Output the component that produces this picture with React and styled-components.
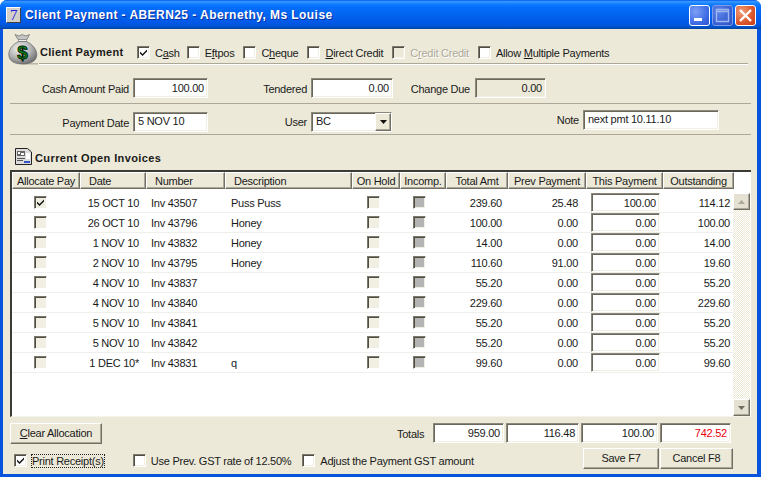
import React from "react";
import styled, { createGlobalStyle, css } from "styled-components";

const Global = createGlobalStyle`
  html, body { margin: 0; padding: 0; background: #fff; }
  * { box-sizing: border-box; }
  body { font-family: "Liberation Sans", Arial, sans-serif; font-size: 11px; color: #1a1a1a; letter-spacing: -0.25px; }
`;

const sunken = css`
  border-style: solid;
  border-width: 1px;
  border-color: #8c897a #fff #fff #8c897a;
  box-shadow: inset 1px 1px 0 #6a685c, inset -1px -1px 0 #f1efe2;
`;
const raised = css`
  border-style: solid;
  border-width: 1px;
  border-color: #fff #716f64 #716f64 #fff;
  box-shadow: inset -1px -1px 0 #aca899;
  background: #ece9d8;
`;

const Window = styled.div`
  width: 761px; height: 477px; display: flex; flex-direction: column;
  background: #0855dd; border-radius: 7px 7px 0 0; overflow: hidden;
`;
const TitleBar = styled.div`
  height: 29px; flex: none; display: flex; align-items: center; padding: 1px 5px 0 6px;
  background: linear-gradient(180deg, #0058ee 0%, #3593ff 5%, #288eff 9%, #127dff 14%, #036ffc 24%, #0262ee 55%, #0057e5 82%, #0255d4 90%, #004db8 96%, #0040a0 100%);
`;
const AppIcon = styled.div`
  width: 15px; height: 16px; margin-right: 4px;
  background: #d4d0c8; border: 1px solid; border-color: #fff #404040 #404040 #fff;
  color: #1a1ae0; font: 15px/14px "Liberation Serif", serif; text-align: center;
`;
const TitleText = styled.div`
  flex: 1; color: #fff; font-weight: 700; font-size: 12px; letter-spacing: 0.44px;
  text-shadow: 1px 1px 0 #0f2f9f; white-space: nowrap;
`;
const WinBtn = styled.div`
  width: 21px; height: 21px; margin-left: 2px; border: 1px solid #fff; border-radius: 3px;
  display: flex; align-items: center; justify-content: center;
  background: ${p => p.$close
    ? "radial-gradient(circle at 30% 30%, #f0a07a, #de5a30 55%, #c63a12)"
    : p.$dim
      ? "radial-gradient(circle at 30% 30%, #5f86e8, #3a62d4 60%, #2f50c0)"
      : "radial-gradient(circle at 30% 30%, #7ea0f4, #3f6ee6 60%, #2a50cf)"};
  ${p => p.$dim && "border-color: #7f9ce8;"}
`;

const Body = styled.div`
  flex: 1; margin: 0 4px 3px 3px; background: #ece9d8; display: flex; flex-direction: column; min-height: 0;
`;

const Header = styled.div`
  height: 37px; flex: none; display: flex; padding: 5px 9px 0 5px;
`;
const BagBox = styled.div`width: 31px; height: 31px; flex: none;`;
const HeaderMain = styled.div`
  flex: 1; display: flex; align-items: flex-end; height: 31px; padding: 0 0 5px 1px;
  border-bottom: 1px solid #fff; box-shadow: inset 0 -1px 0 #aca899;
`;
const Strong = styled.div`font-weight: 700; letter-spacing: 0.28px; white-space: nowrap; font-size: 11px;`;
const HeaderTitle = styled(Strong)`width: 97px; flex: none; padding-bottom: 1px;`;

const CheckWrap = styled.label`
  display: flex; align-items: center; flex: none; white-space: nowrap;
  margin-left: ${p => p.$ml || 0}px; color: ${p => p.$off ? "#aca899" : "inherit"};
  ${p => p.$off && "text-shadow: 1px 1px 0 #fff;"}
`;
const Box = styled.span`
  width: 13px; height: 13px; flex: none; display: flex; align-items: center; justify-content: center;
  border-style: solid; border-width: 1px; border-color: #7c7a6c #fff #fff #7c7a6c;
  box-shadow: inset 1px 1px 0 #4f4d44, inset -1px -1px 0 #f1efe2;
  background: ${p => p.$bg || "#fff"};
`;
const CheckLabel = styled.span`
  margin-left: ${p => p.$gap || 5}px; ${p => p.$focus && "outline: 1px dotted #222; outline-offset: 0;"}
`;

const Tick = () => (
  <svg width="9" height="9" viewBox="0 0 9 9"><path d="M1 3.5 L3.5 6 L8 1.5 V3.5 L3.5 8 L1 5.5Z" fill="#111" /></svg>
);
function Check({ on, label, ml, off, gap, focus, bg }) {
  return (
    <CheckWrap $ml={ml} $off={off}>
      <Box $bg={off ? "#ece9d8" : bg}>{on && <Tick />}</Box>
      {label && <CheckLabel $gap={gap} $focus={focus}>{label}</CheckLabel>}
    </CheckWrap>
  );
}

const FormRow = styled.div`
  height: ${p => p.$h}px; flex: none; margin: 0 6px 0 7px; display: flex; align-items: center;
  border-bottom: 1px solid #aca899; padding-top: ${p => p.$pt || 0}px;
`;
const Label = styled.div`
  width: ${p => p.$w}px; flex: none; text-align: right; padding: ${p => p.$low ?? 3}px ${p => p.$pr ?? 4}px 0 0; white-space: nowrap;
`;
const Field = styled.div`
  width: ${p => p.$w}px; height: ${p => p.$h || 20}px; flex: none; ${sunken};
  background: ${p => p.$bg || "#fff"}; color: ${p => p.$color || "inherit"};
  display: flex; align-items: center; justify-content: ${p => p.$left ? "flex-start" : "flex-end"};
  padding: 0 ${p => p.$left ? 0 : 3}px ${p => p.$left ? 1 : 0}px ${p => p.$left ? 4 : 0}px; white-space: nowrap;
  margin-left: ${p => p.$ml || 0}px;
  position: relative;
`;
const NoteField = styled(Field)`margin-top: -4px; padding-bottom: 2px;`;
const NoteLabel = styled(Label)`margin-top: -4px;`;
const DropBtn = styled.span`
  position: absolute; right: 0; top: 0; width: 16px; height: 18px; ${raised};
  display: flex; align-items: center; justify-content: center;
`;
const Arrow = ({ up, color = "#111" }) => (
  <svg width="7" height="4" viewBox="0 0 7 4">
    <path d={up ? "M3.5 0 L7 4 H0Z" : "M0 0 H7 L3.5 4Z"} fill={color} />
  </svg>
);

const SectionTitle = styled.div`
  height: 35px; flex: none; display: flex; align-items: flex-end; padding: 0 0 5px 12px;
`;
const SectionText = styled(Strong)`margin-left: 3px; padding-bottom: 1px; letter-spacing: 0.4px;`;

const Table = styled.div`
  width: 741px; height: 247px; flex: none; margin-left: 7px; background: #fff;
  border-style: solid; border-width: 2px 0 1px 2px; border-color: #3c3c36 transparent #f5f4ea #3c3c36;
  display: flex; flex-direction: column;
`;
const cols = "68px 66px 79px 127px 48px 46px 62px 78px 77px 71px";
const HeadRow = styled.div`
  display: grid; grid-template-columns: ${cols}; height: 17px; flex: none;
`;
const HeadCell = styled.div`
  ${raised}; display: flex; align-items: center; white-space: nowrap;
  justify-content: ${p => p.$left ? "flex-start" : "center"};
  padding-left: ${p => p.$pl || 0}px;
  height: 17px;
`;
const TableBody = styled.div`
  flex: 1; display: flex; padding-top: 4px; min-height: 0;
`;
const Rows = styled.div`width: 721px; flex: none;`;
const Row = styled.div`
  display: grid; grid-template-columns: ${cols}; height: 20px;
  border-bottom: 1px solid #efefeb; align-items: center;
`;
const Cell = styled.div`
  white-space: nowrap; text-align: ${p => p.$right ? "right" : "left"};
  padding: 0 ${p => p.$pr || 0}px 0 ${p => p.$pl || 0}px;
`;
const CheckCell = styled.div`display: flex; padding-left: ${p => p.$pl}px;`;
const PayInput = styled(Field)`margin-left: 5px;`;

const Scrollbar = styled.div`
  width: 17px; flex: none; display: flex; flex-direction: column; justify-content: space-between;
  background: repeating-conic-gradient(#ece9d8 0 25%, #fff 0 50%) 0 0 / 2px 2px;
`;
const ScrollBtn = styled.div`
  width: 17px; height: 17px; ${raised}; background: #e4e1d2;
  display: flex; align-items: center; justify-content: center;
`;

const FooterOne = styled.div`
  height: 30px; flex: none; display: flex; align-items: flex-start; padding: 6px 0 0 7px;
`;
const PlainBtn = styled.div`
  ${raised}; height: ${p => p.$h}px; width: ${p => p.$w}px; flex: none;
  display: flex; align-items: center; justify-content: center;
  margin-left: ${p => p.$ml || 0}px;
  padding-bottom: 1px;
`;
const TotalsLabel = styled.div`width: 32px; margin-left: 295px; flex: none; padding-top: 5px;`;
const FooterTwo = styled.div`
  flex: 1; display: flex; align-items: flex-start; padding: 1px 24px 0 11px;
`;
const ChecksBox = styled.div`display: flex; align-items: center; height: 22px; padding-top: 3px; margin-right: auto;`;

const MoneyBag = () => (
  <svg width="31" height="31" viewBox="0 0 31 31">
    <defs>
      <radialGradient id="bag" cx="0.38" cy="0.32" r="0.75">
        <stop offset="0" stopColor="#f4f4f4" /><stop offset="0.55" stopColor="#b4b4b4" /><stop offset="1" stopColor="#666" />
      </radialGradient>
    </defs>
    <path d="M14 29 H30 V30.5 H14Z" fill="#b9b6a6" />
    <path d="M7 0.5 L11 2 L14 0.5 L18 2 L21.5 0.5 L19 5.5 H10Z" fill="#c4c4c4" stroke="#6a6a6a" strokeWidth="0.7" />
    <path d="M10.5 5.5 H18.5 V7.5 H10.5Z" fill="#f0f0f0" stroke="#777" strokeWidth="0.6" />
    <path d="M10.5 7.5 C4 10.5 0.5 16 0.8 21 C1.2 27.5 7 30 14.5 30 C22 30 28.4 27.5 28.8 21 C29 16 25 10.5 18.5 7.5Z" fill="url(#bag)" stroke="#686868" strokeWidth="0.7" />
    <text x="14.5" y="25" textAnchor="middle" fontFamily="Liberation Sans" fontWeight="700" fontSize="19" letterSpacing="0" fill="#0b8a1c" stroke="#021d07" strokeWidth="0.9">$</text>
  </svg>
);
const InvoiceIcon = () => (
  <svg width="17" height="17" viewBox="0 0 17 17">
    <path d="M0.5 0.5 H12.5 L16.5 4 V16.5 H0.5Z" fill="#dcdcdc" stroke="#222" />
    <rect x="2" y="3" width="8" height="5" fill="#666" />
    <rect x="3" y="4" width="2" height="2" fill="#fff" /><rect x="6" y="5" width="3" height="2" fill="#fff" />
    <rect x="11" y="5" width="4" height="6" fill="#fff" />
    <rect x="2" y="10" width="8" height="1" fill="#555" /><rect x="2" y="12" width="6" height="1" fill="#555" />
    <rect x="9" y="13" width="6" height="2" fill="#3454c8" />
  </svg>
);

const data = [
  ["15 OCT 10", "Inv 43507", "Puss Puss", "239.60", "25.48", "100.00", "114.12", true],
  ["26 OCT 10", "Inv 43796", "Honey", "100.00", "0.00", "0.00", "100.00"],
  ["1 NOV 10", "Inv 43832", "Honey", "14.00", "0.00", "0.00", "14.00"],
  ["2 NOV 10", "Inv 43795", "Honey", "110.60", "91.00", "0.00", "19.60"],
  ["4 NOV 10", "Inv 43837", "", "55.20", "0.00", "0.00", "55.20"],
  ["4 NOV 10", "Inv 43840", "", "229.60", "0.00", "0.00", "229.60"],
  ["5 NOV 10", "Inv 43841", "", "55.20", "0.00", "0.00", "55.20"],
  ["5 NOV 10", "Inv 43842", "", "55.20", "0.00", "0.00", "55.20"],
  ["1 DEC 10*", "Inv 43831", "q", "99.60", "0.00", "0.00", "99.60"],
];

export default function App() {
  return (
    <Window>
      <Global />
      <TitleBar>
        <AppIcon>7</AppIcon>
        <TitleText>Client Payment - ABERN25 - Abernethy, Ms Louise</TitleText>
        <WinBtn>
          <svg width="19" height="19" viewBox="0 0 19 19"><rect x="4" y="12" width="8" height="3" fill="#fff" /></svg>
        </WinBtn>
        <WinBtn $dim>
          <svg width="19" height="19" viewBox="0 0 19 19"><path d="M3.5 3.5 H15.5 V15.5 H3.5Z M3.5 5.5 H15.5" fill="none" stroke="#9fb6ee" strokeWidth="1.4" /></svg>
        </WinBtn>
        <WinBtn $close>
          <svg width="19" height="19" viewBox="0 0 19 19"><path d="M4 4 L15 15 M15 4 L4 15" stroke="#fff" strokeWidth="2.4" /></svg>
        </WinBtn>
      </TitleBar>
      <Body>
        <Header>
          <BagBox><MoneyBag /></BagBox>
          <HeaderMain>
            <HeaderTitle>Client Payment</HeaderTitle>
            <Check on label={<>C<u>a</u>sh</>} />
            <Check ml={7} label={<>E<u>f</u>tpos</>} />
            <Check ml={9} label={<>C<u>h</u>eque</>} />
            <Check ml={9} label={<><u>D</u>irect Credit</>} />
            <Check ml={9} off label={<>C<u>r</u>edit Credit</>} />
            <Check ml={9} label={<>Allow <u>M</u>ultiple Payments</>} />
          </HeaderMain>
        </Header>
        <FormRow $h={38} $pt={6}>
          <Label $w={123}>Cash Amount Paid</Label>
          <Field $w={75}>100.00</Field>
          <Label $w={103}>Tendered</Label>
          <Field $w={82}>0.00</Field>
          <Label $w={82} $pr={5}>Change Due</Label>
          <Field $w={71} $bg="#ece9d8">0.00</Field>
        </FormRow>
        <FormRow $h={31} $pt={5}>
          <Label $w={123}>Payment Date</Label>
          <Field $w={75} $left>5 NOV 10</Field>
          <Label $w={103} $low={1}>User</Label>
          <Field $w={81} $left>BC<DropBtn><Arrow /></DropBtn></Field>
          <NoteLabel $w={191} $low={0}>Note</NoteLabel>
          <NoteField $w={136} $left>next pmt 10.11.10</NoteField>
        </FormRow>
        <SectionTitle>
          <InvoiceIcon />
          <SectionText>Current Open Invoices</SectionText>
        </SectionTitle>
        <Table>
          <HeadRow>
            <HeadCell>Allocate Pay</HeadCell>
            <HeadCell $left $pl={8}>Date</HeadCell>
            <HeadCell $left $pl={8}>Number</HeadCell>
            <HeadCell $left $pl={8}>Description</HeadCell>
            <HeadCell>On Hold</HeadCell>
            <HeadCell>Incomp.</HeadCell>
            <HeadCell>Total Amt</HeadCell>
            <HeadCell>Prev Payment</HeadCell>
            <HeadCell>This Payment</HeadCell>
            <HeadCell>Outstanding</HeadCell>
          </HeadRow>
          <TableBody>
            <Rows>
              {data.map((r, i) => (
                <Row key={i}>
                  <CheckCell $pl={22}><Check on={r[7]} bg="#f1efe2" /></CheckCell>
                  <Cell $right $pr={7}>{r[0]}</Cell>
                  <Cell $pl={5}>{r[1]}</Cell>
                  <Cell $pl={6}>{r[2]}</Cell>
                  <CheckCell $pl={15}><Check bg="#f1efe2" /></CheckCell>
                  <CheckCell $pl={13}><Check bg="#b4b4b4" /></CheckCell>
                  <Cell $right $pr={6}>{r[3]}</Cell>
                  <Cell $right $pr={8}>{r[4]}</Cell>
                  <PayInput $w={69} $h={19}>{r[5]}</PayInput>
                  <Cell $right $pr={4}>{r[6]}</Cell>
                </Row>
              ))}
            </Rows>
            <Scrollbar>
              <ScrollBtn><Arrow up color="#aca899" /></ScrollBtn>
              <ScrollBtn><Arrow color="#6f6d60" /></ScrollBtn>
            </Scrollbar>
          </TableBody>
        </Table>
        <FooterOne>
          <PlainBtn $w={92} $h={21}><span><u>C</u>lear Allocation</span></PlainBtn>
          <TotalsLabel>Totals</TotalsLabel>
          <Field $w={71} $ml={4}>959.00</Field>
          <Field $w={73} $ml={2}>116.48</Field>
          <Field $w={77} $ml={2}>100.00</Field>
          <Field $w={71} $ml={2} $color="#e8000b">742.52</Field>
        </FooterOne>
        <FooterTwo>
          <ChecksBox>
            <Check on label="Print Receipt(s)" focus />
            <Check ml={29} label="Use Prev. GST rate of 12.50%" />
            <Check ml={11} label="Adjust the Payment GST amount" />
          </ChecksBox>
          <PlainBtn $w={76} $h={21}>Save F7</PlainBtn>
          <PlainBtn $w={73} $h={21} $ml={1}>Cancel F8</PlainBtn>
        </FooterTwo>
      </Body>
    </Window>
  );
}
